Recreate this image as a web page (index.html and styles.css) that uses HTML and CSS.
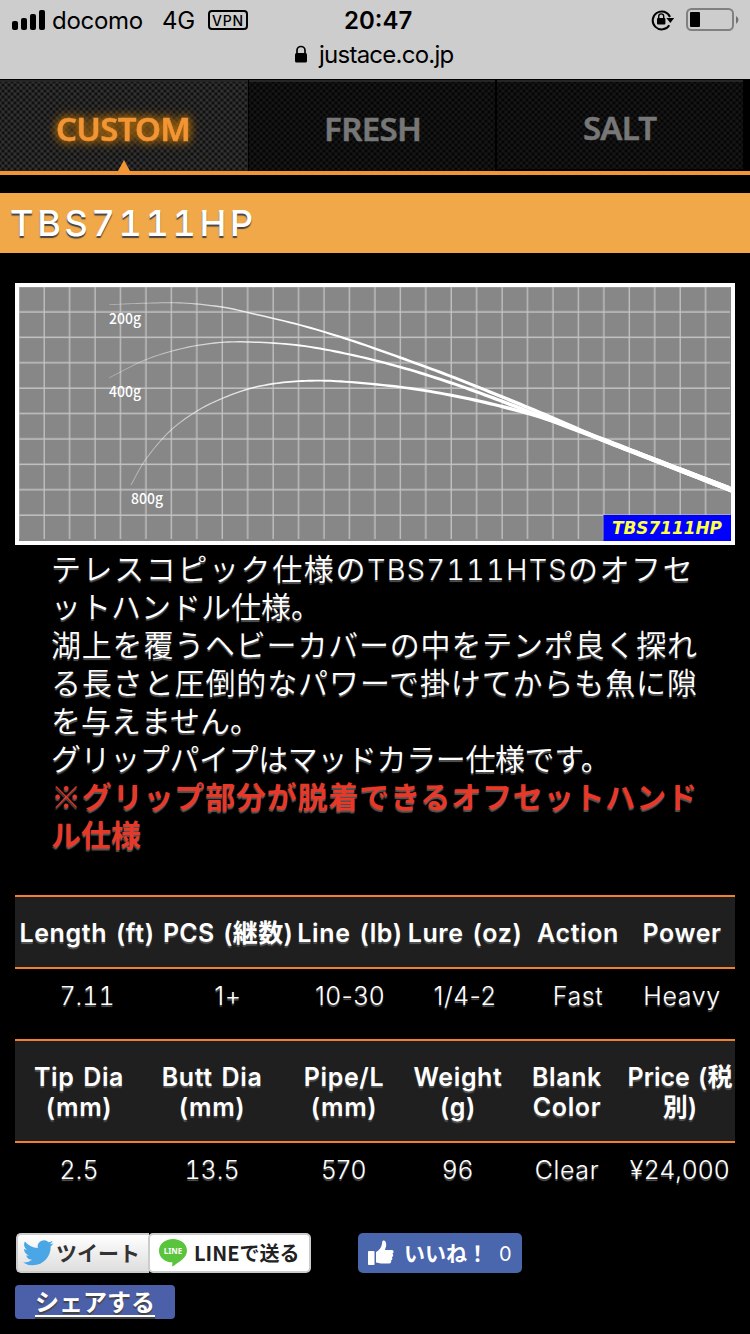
FILE: index.html
```html
<!DOCTYPE html>
<html lang="ja">
<head>
    <meta charset="UTF-8">
    <title>TBS7111HP</title>
    <link rel="stylesheet" href="styles.css">
</head>
<body>
<div class="status">
    <div class="status-row">
        <svg class="signal" width="34" height="20" viewBox="0 0 34 20">
            <rect x="0" y="11" width="6" height="9" rx="2"/>
            <rect x="9" y="8" width="6" height="12" rx="2"/>
            <rect x="18" y="4" width="6" height="16" rx="2"/>
            <rect x="27" y="0" width="6" height="20" rx="2"/>
        </svg>
        <span class="carrier">docomo</span>
        <span class="net">4G</span>
        <span class="vpn">VPN</span>
        <span class="time">20:47</span>
        <svg class="rotate" width="24" height="22" viewBox="0 0 24 22">
            <path d="M18.3 16.2A9 9 0 1 1 19 8" fill="none" stroke="#000" stroke-width="2"/>
            <path d="M15.4 9h7.8l-3.9 5z"/>
            <rect x="6" y="9" width="8.4" height="6.5" rx="1"/>
            <path d="M7.7 9.5V7.4a2.5 2.5 0 0 1 5 0v2.1" fill="none" stroke="#000" stroke-width="1.4"/>
        </svg>
        <svg class="battery" width="53" height="24" viewBox="0 0 53 24">
            <rect x="1" y="1" width="46" height="21" rx="4.5" fill="none" stroke="#808080" stroke-width="2"/>
            <rect x="4" y="4" width="10" height="15" rx="1"/>
            <path d="M50 8q5 3.500 0 8z" fill="#707070"/>
        </svg>
    </div>
    <div class="url">
        <svg width="14" height="18" viewBox="0 0 14 18">
            <rect x="1" y="8" width="12" height="9.500" rx="1.500"/>
            <path d="M3 9V5.500a4 4 0 0 1 8 0V9" fill="none" stroke="#000" stroke-width="1.700"/>
        </svg>
        <span>justace.co.jp</span>
    </div>
</div>

<div class="nav">
    <a class="tab on"><svg width="248" height="92"><text x="56" y="61.500" textLength="135">CUSTOM</text><path d="M118 92l6-11 6 11z"/></svg></a>
    <a class="tab fresh"><svg width="246" height="92"><text x="75" y="62" textLength="98">FRESH</text></svg></a>
    <a class="tab salt"><svg width="246" height="90"><text x="86" y="61" textLength="74">SALT</text></svg></a>
</div>

<h1>TBS7111HP</h1>

<div class="content">
    <svg class="chart" width="720" height="262" viewBox="15 283 720 262">
        <defs>
            <pattern id="grid" x="19.500" y="287.300" width="25.440" height="25.400" patternUnits="userSpaceOnUse">
                <path d="M24.700 0v25.400M0 24.700h25.440" stroke="#c4c4c4" stroke-width="1.300" fill="none"/>
            </pattern>
            <linearGradient id="fade" gradientUnits="userSpaceOnUse" x1="105" y1="0" x2="300" y2="0">
                <stop offset="0" stop-color="#fff" stop-opacity=".3"/>
                <stop offset="1" stop-color="#fff"/>
            </linearGradient>
        </defs>
        <rect x="15" y="283" width="720" height="262" fill="#fff"/>
        <rect x="19" y="287" width="712" height="254" fill="#878787"/>
        <rect x="19" y="287" width="711" height="252" fill="url(#grid)"/>
        <g id="curves" fill="url(#fade)"></g>
        <g class="load">
            <text x="109" y="323.500" textLength="32" lengthAdjust="spacingAndGlyphs">200g</text>
            <text x="109" y="397" textLength="32" lengthAdjust="spacingAndGlyphs">400g</text>
            <text x="131" y="504" textLength="32" lengthAdjust="spacingAndGlyphs">800g</text>
        </g>
        <rect x="603.500" y="515" width="127.500" height="26" fill="#00f"/>
        <text class="model" x="612" y="534" textLength="110" lengthAdjust="spacingAndGlyphs">TBS7111HP</text>
    </svg>

    <p class="desc"><span class="wide">テレスコピック仕様の<span class="en">TBS7111HTS</span>のオフセ</span><br>ットハンドル仕様。<br>湖上を覆うヘビーカバーの中をテンポ良く探れる長さと圧倒的なパワーで掛けてからも魚に隙を与えません。<br><span class="tight">グリップパイプはマッドカラー仕様です。</span><br><b>※グリップ部分が脱着できるオフセットハンドル仕様</b></p>

    <table class="spec spec1">
        <tr><th>Length (ft)</th><th>PCS (継数)</th><th>Line (lb)</th><th>Lure (oz)</th><th>Action</th><th>Power</th></tr>
        <tr><td class="num">7.11</td><td>1+</td><td>10-30</td><td>1/4-2</td><td>Fast</td><td>Heavy</td></tr>
    </table>
    <table class="spec spec2">
        <tr><th>Tip Dia<br>(mm)</th><th>Butt Dia<br>(mm)</th><th>Pipe/L<br>(mm)</th><th>Weight<br>(g)</th><th>Blank<br>Color</th><th>Price (税<br>別)</th></tr>
        <tr><td>2.5</td><td class="num">13.5</td><td>570</td><td>96</td><td>Clear</td><td>¥24,000</td></tr>
    </table>

    <div class="social">
        <a class="tweet">
            <svg width="31" height="26" viewBox="0 0 24 20">
                <path fill="#4aa6e4" d="M23.600 2.400a9.600 9.600 0 0 1-2.800.8A4.900 4.900 0 0 0 22.900.5a9.700 9.700 0 0 1-3.100 1.200 4.900 4.900 0 0 0-8.300 4.400A13.800 13.800 0 0 1 1.500 1 4.900 4.900 0 0 0 3 7.500a4.800 4.800 0 0 1-2.200-.6c0 2.300 1.600 4.400 3.900 4.900a4.900 4.900 0 0 1-2.200.1 4.900 4.900 0 0 0 4.600 3.400A9.800 9.800 0 0 1 0 17.300a13.800 13.800 0 0 0 7.500 2.200c9 0 14.200-7.600 13.900-14.500a9.900 9.900 0 0 0 2.200-2.600z"/>
            </svg>
            <span>ツイート</span>
        </a>
        <a class="line">
            <svg width="28" height="28" viewBox="0 0 28 28">
                <path fill="#5ac43c" d="M14 0c7.800 0 14 5 14 11.700C28 19 19.500 23 14 27.300q-1 .5-.8-1l.2-3C6 23.300 0 18.500 0 11.700 0 5 6.200 0 14 0z"/>
                <text x="4.800" y="15.200" textLength="18.400" lengthAdjust="spacingAndGlyphs">LINE</text>
            </svg>
            <span>LINEで送る</span>
        </a>
        <a class="like">
            <svg width="26" height="26" viewBox="0 0 26 26" fill="#fff">
                <rect x="0" y="11" width="6.500" height="14" rx=".8"/>
                <path d="M8 12c4-2 5.500-5 6-8.500C14.200 1 14.700.5 15.700.5c1.700 0 2.500 2 2.500 4 0 2.200-.5 3.500-1.400 5.500H24c2 0 2 3.300.3 3.800 1.400.8 1.200 3-.5 3.500 1 .9.700 2.900-.8 3.300.6 1.200 0 3-2 3H13c-2 0-3-.9-5-1z"/>
            </svg>
            <span>いいね！</span><i>0</i>
        </a>
        <a class="share"><span>シェアする</span></a>
    </div>
</div>
<script>
    // x, y points of each bend curve, tip first
    var curves = [
        [[109,304.7],[145,303.2],[183,303],[222,307],[250,313],[300,325],[350,340],[400,357.500],[450,376],[500,396],[550,417],[603,440],[660,462],[732,490]],
        [[109,378],[145,360],[180,349],[215,343],[250,342],[300,345.500],[350,354.500],[400,367],[450,382.500],[500,400.500],[550,420],[603,440],[660,462],[732,490]],
        [[131,485],[146,459],[170,431],[197,411],[222,398.500],[250,388.500],[280,382.800],[312,380.700],[345,381.700],[400,387],[450,395],[500,406],[550,420],[603,439.500],[660,462],[732,490]]
    ];
    function at(a, b, c, d, t){
        return .5 * (2*b + (c-a)*t + (2*a-5*b+4*c-d)*t*t + (3*b-a-3*c+d)*t*t*t);
    }
    curves.forEach(function (p) {
        var top = [], low = [];
        for(var i = 0;i < p.length-1;i++){
            var a = p[i-1] || p[i], b = p[i], c = p[i+1], d = p[i+2] || c;
            for(var t = 0;t < .95;t += .1){
                var x = at(a[0], b[0], c[0], d[0], t),
                    y = at(a[1], b[1], c[1], d[1], t),
                    dx = at(a[0], b[0], c[0], d[0], t+.01) - x,
                    dy = at(a[1], b[1], c[1], d[1], t+.01) - y,
                    len = Math.hypot(dx, dy),
                    w = .4 + 2.300 * Math.pow((x-105)/626, 1.3);
                top.push((x + dy/len*w) + ',' + (y - dx/len*w));
                low.unshift((x - dy/len*w) + ',' + (y + dx/len*w));
            }
        }
        top.push('731,487');
        low.unshift('731,492.500');
        var el = document.createElementNS('http://www.w3.org/2000/svg', 'polygon');
        el.setAttribute('points', top.concat(low).join(' '));
        document.getElementById('curves').appendChild(el);
    });
</script>
</body>
</html>
```
FILE: styles.css
```css
*{
    box-sizing: border-box;
}
body{
    margin: 0;
    width: 750px;
    height: 1334px;
    overflow: hidden;
    background: #000;
    color: #fff;
    font-family: Inter, "Noto Sans CJK JP", sans-serif;
}
svg{
    display: block;
    flex: none;
}
.status{
    height: 79px;
    background: #cdcdcd;
    color: #000;
}
.status-row{
    display: flex;
    align-items: center;
    height: 40px;
    padding-left: 12px;
    font-size: 24px;
    line-height: 40px;
}
.carrier, .net, .time{
    padding-top: 2px;
}
.carrier{
    width: 110px;
    padding-left: 6px;
    letter-spacing: -.3px;
}
.net{
    width: 40px;
    margin-left: 6px;
    letter-spacing: -.3px;
}
.vpn{
    width: 40px;
    height: 20px;
    margin-left: 6px;
    border: 2px solid #000;
    border-radius: 4px;
    font-size: 14px;
    font-weight: 500;
    line-height: 17px;
    letter-spacing: .9px;
    text-align: center;
}
.time{
    width: 70px;
    margin-left: 96px;
    font-weight: 600;
    letter-spacing: 0;
}
.rotate{
    margin-left: 237px;
}
.battery{
    margin-left: 11px;
}
.url{
    display: flex;
    align-items: center;
    height: 28px;
    padding-left: 294px;
    font-size: 24px;
    letter-spacing: -.75px;
}
.url span{
    margin-left: 11px;
}

.nav{
    display: flex;
    gap: 2px;
    height: 96px;
    border-bottom: 4px solid #f29535;
}
.tab{
    border-top: 2px solid #252525;
    height: 91px;
    margin-top: 1px;
    background:
        radial-gradient(ellipse at 50% 50%, #050505 20%, transparent 75%) 0 0/6px 6px,
        radial-gradient(ellipse at 50% 50%, #050505 20%, transparent 75%) 3px 3px/6px 6px,
        #262626;
}
.tab svg{
    margin-top: -3px;
}
.salt{
    height: 89px;
}
.on{
    margin-right: -1px;
    background:
        radial-gradient(ellipse at 50% 50%, #101010 20%, transparent 75%) 0 0/6px 6px,
        radial-gradient(ellipse at 50% 50%, #101010 20%, transparent 75%) 3px 3px/6px 6px,
        #505050;
}
.tab text{
    font: 600 33px "Noto Sans", sans-serif;
    fill: #777;
    stroke: #777;
    stroke-width: .5px;
}
.on text{
    fill: #f29535;
    stroke: #f29535;
    filter: drop-shadow(0 0 4px #b87010) drop-shadow(0 0 5px #805008);
}
.on path{
    fill: #f29535;
}

h1{
    height: 60px;
    margin: 18px 0 30px;
    padding-left: 10px;
    background: #f0a848;
    font-size: 36px;
    font-weight: 500;
    line-height: 60px;
    letter-spacing: 3.700px;
    font-feature-settings: "tnum";
    text-shadow: 0 2px 1px #444;
}
.content{
    padding: 0 15px;
}
.load text{
    font: 500 15px "Noto Sans CJK JP", sans-serif;
    fill: #fff;
}
.model{
    font: italic bold 17px "DejaVu Sans", sans-serif;
    fill: #ff4;
}

.desc{
    width: 646px;
    margin: 3px 0 0 36px;
    font-family: "Noto Sans CJK JP", sans-serif;
    font-size: 30px;
    line-height: 38px;
    text-align: justify;
    font-weight: 350;
    text-shadow: 0 2px 1px #555;
}
.wide{
    letter-spacing: 1.600px;
}
.en{
    font-family: Inter, sans-serif;
    font-weight: 300;
    font-size: 29px;
    line-height: 1;
    letter-spacing: 1.200px;
    font-feature-settings: "tnum";
}
.tight{
    letter-spacing: -.4px;
}
.desc b{
    color: #e83828;
    font-weight: 700;
}

.spec{
    width: 720px;
    table-layout: fixed;
    border-collapse: collapse;
    text-align: center;
    line-height: 30px;
    text-shadow: 0 2px 1px #555;
}
.spec1{
    margin-top: 43px;
}
.spec th, .spec td{
    padding: 0;
    white-space: nowrap;
}
.spec th{
    height: 72px;
    padding-top: 2px;
    background: #1f1f1f;
    border-top: 2px solid #f08030;
    border-bottom: 2px solid #f08030;
    font-weight: 600;
    font-size: 25px;
    letter-spacing: .6px;
    word-spacing: 2px;
}
.spec td{
    height: 71px;
    padding-bottom: 17px;
    font-weight: 300;
    font-size: 25px;
    letter-spacing: .6px;
}
.spec .num{
    letter-spacing: 0;
    font-feature-settings: "tnum";
}
.spec2 th{
    height: 102px;
}
.spec1 th:nth-child(1){ width: 144px; }
.spec1 th:nth-child(2){ width: 138px; letter-spacing: .3px; }
.spec1 th:nth-child(3){ width: 106px; }
.spec1 th:nth-child(4){ width: 124px; }
.spec1 th:nth-child(5){ width: 102px; }
.spec2 th:nth-child(1){ width: 128px; }
.spec2 th:nth-child(2){ width: 138px; }
.spec2 th:nth-child(3){ width: 126px; }
.spec2 th:nth-child(4){ width: 102px; }
.spec2 th:nth-child(5){ width: 116px; }
.spec2 th:nth-child(6){
    letter-spacing: 0;
}

.social{
    display: flex;
    flex-wrap: wrap;
    row-gap: 12px;
    margin-top: 20px;
    font-family: "Noto Sans CJK JP", sans-serif;
}
.social a{
    display: flex;
    align-items: center;
    height: 40px;
    white-space: nowrap;
}
.social span, .like i{
    margin-top: -2px;
}
.tweet{
    width: 133px;
    margin-left: 1px;
    padding-left: 5px;
    border: 2px solid #ccc;
    border-right: 0;
    border-radius: 5px 0 0 5px;
    background: linear-gradient(#fff, #dedede);
    color: #333;
    font-size: 21px;
    font-weight: 700;
}
.tweet span{
    margin-left: 2px;
}
.line{
    width: 163px;
    margin-left: -1px;
    padding-left: 9px;
    border: 2px solid #ccc;
    border-radius: 5px;
    background: #fff;
    color: #222;
    font-size: 20px;
    font-weight: 700;
}
.line text{
    font: bold 9.500px "Noto Sans", sans-serif;
    fill: #fff;
}
.line span{
    margin-left: 7px;
}
.like{
    width: 164px;
    margin: 0 190px 0 47px;
    padding-left: 10px;
    border-radius: 5px;
    background: #4a66ad;
    font-size: 21px;
    font-weight: 700;
}
.like span{
    margin-left: 10px;
}
.like i{
    margin-left: 11px;
    margin-top: 2px;
    font: 20px Inter, sans-serif;
}
.social .share{
    width: 160px;
    height: 34px;
    justify-content: center;
    border-radius: 4px;
    background: #4c5fa9;
    font-size: 24px;
    font-weight: 700;
    text-shadow: 0 2px 1px #444;
}
.share span{
    margin-top: -4px;
    text-decoration: underline;
    text-underline-offset: 4px;
}
```
